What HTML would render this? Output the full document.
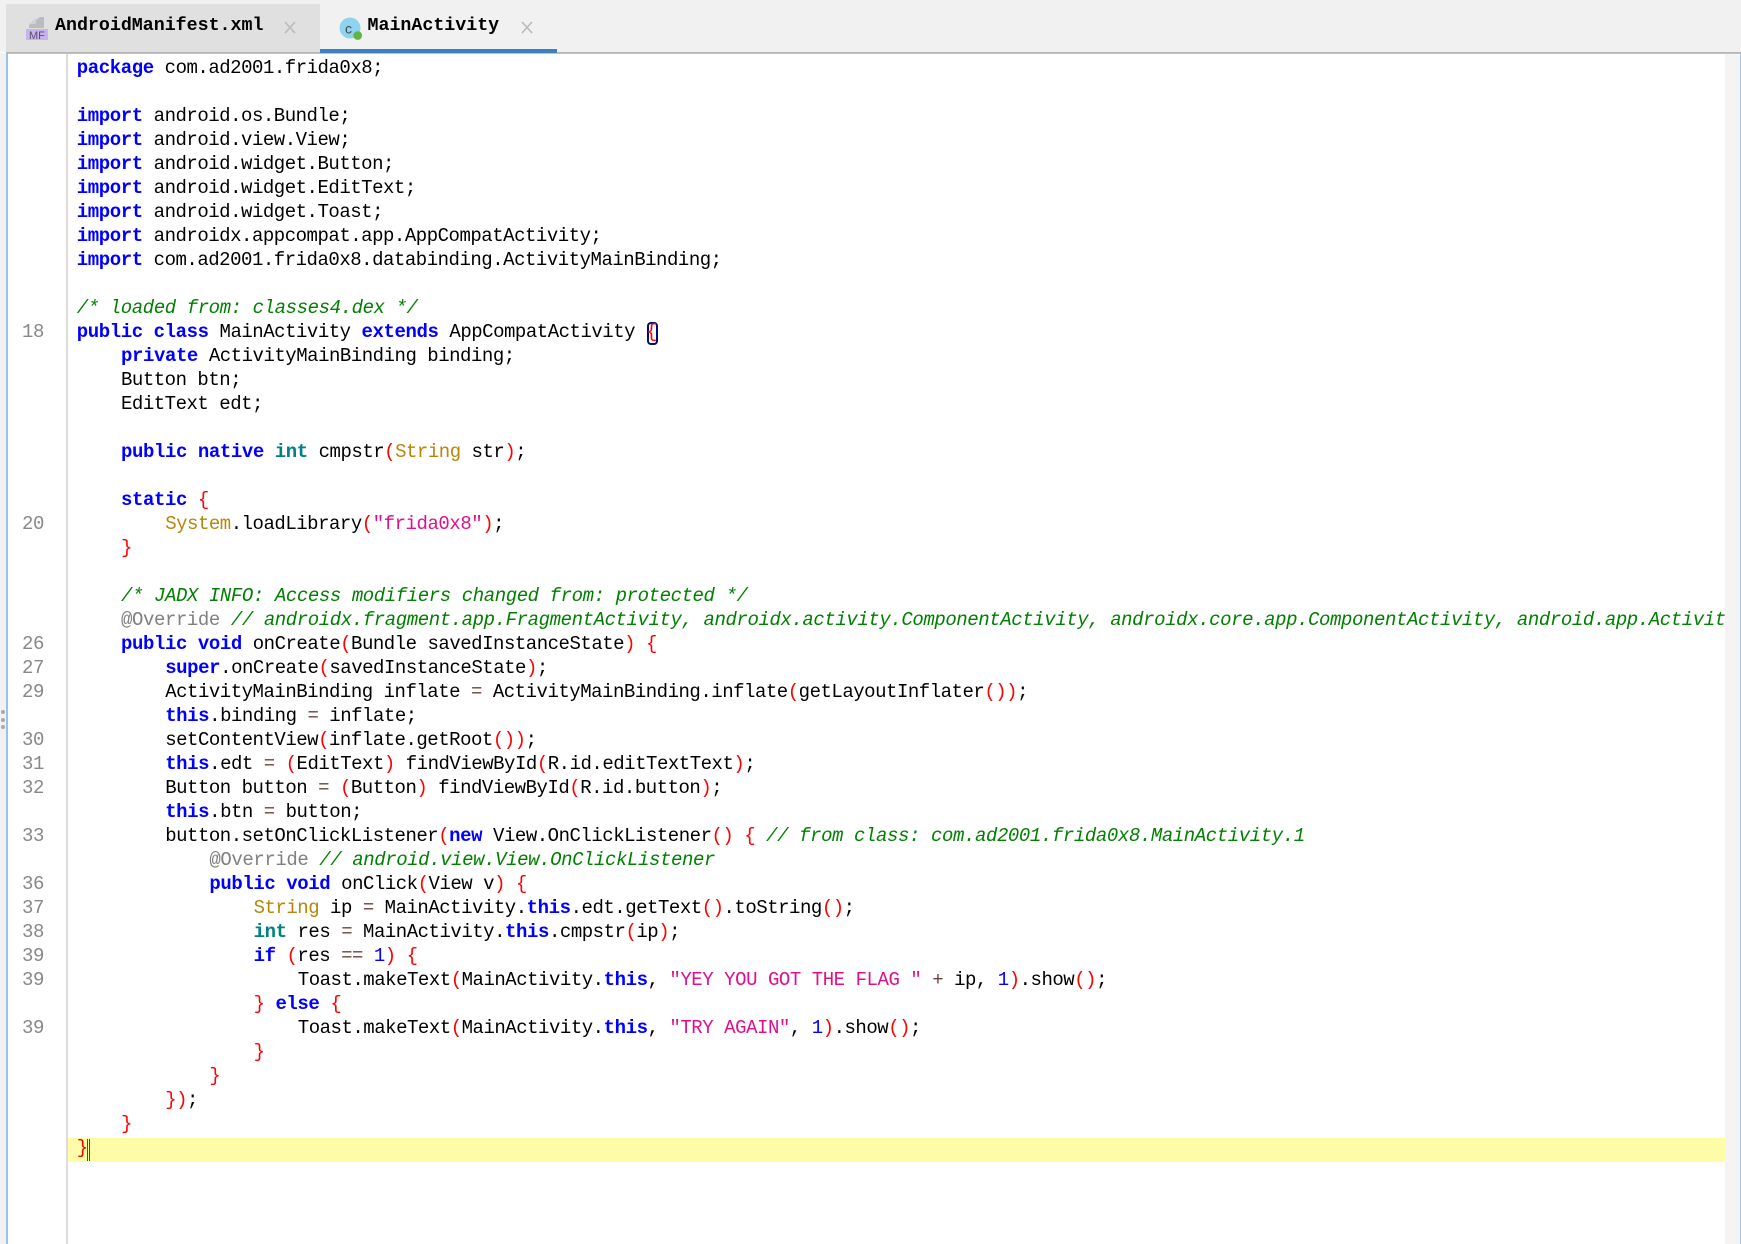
<!DOCTYPE html>
<html><head><meta charset="utf-8"><title>MainActivity</title>
<style>
html,body{margin:0;padding:0;background:#fff}
#r{position:relative;width:1741px;height:1244px;overflow:hidden;background:#fff;font-family:"Liberation Mono",monospace}
.a{position:absolute}
#code{position:absolute;left:76.6px;top:1px;width:1648px;height:1244px;overflow:hidden;font-size:19px;letter-spacing:-0.48px;color:#000}
#code div{position:absolute;left:0.2px;height:24px;line-height:24px;white-space:pre}
#code div.i1{left:44.4px}
#code div.i2{left:88.6px}
#code div.i3{left:132.8px}
#code div.i4{left:177px}
#code div.i5{left:221.2px}
.k{color:#0000ff;font-weight:bold;letter-spacing:-0.41px}
.t{color:#008080;font-weight:bold;letter-spacing:-0.41px}
.r{color:#ff0000}
.c{color:#008000;font-style:italic;letter-spacing:-0.41px}
.s{color:#e0108c;letter-spacing:-0.45px}
.y{color:#b8860b}
.o{color:#6e4040}
.n{color:#0000ff}
.g{color:#808080;letter-spacing:-0.41px}
.ln{position:absolute;left:0;width:44px;text-align:right;height:24px;line-height:24px;font-size:19px;letter-spacing:-0.41px;color:#888;margin-top:1px}
.tab{position:absolute;top:14px;height:24px;line-height:24px;font-size:18.3px;font-weight:bold;color:#000}
</style></head><body><div id="r">
<div class="a" style="left:0;top:0;width:1741px;height:52px;background:#f1f1f1"></div>
<div class="a" style="left:6px;top:4px;width:314px;height:48px;background:#e0e0e0"></div>
<div class="a" style="left:320px;top:49px;width:237px;height:4px;background:#3d80c4"></div>
<div class="a" style="left:557px;top:52px;width:1184px;height:1px;background:#b5b5b5"></div>
<div class="a" style="left:6px;top:52px;width:314px;height:1px;background:#b5b5b5"></div>
<div class="a" style="left:0;top:53px;width:6px;height:1191px;background:#f1f1f1"></div>
<div class="a" style="left:6px;top:53px;width:1735px;height:1px;background:#a9c8e8"></div>
<div class="a" style="left:6px;top:53px;width:2px;height:1191px;background:#9cc0e6"></div>
<div class="a" style="left:66px;top:54px;width:2px;height:1190px;background:#dcdcdc"></div>
<div class="a" style="left:1725px;top:54px;width:15px;height:1190px;background:#f4f4f4"></div>
<div class="a" style="left:1740px;top:53px;width:1px;height:1191px;background:#a9c8e8"></div>
<div class="a" style="left:68px;top:1138px;width:1657px;height:24px;background:#fffca8"></div>
<div class="a" style="left:87px;top:1139px;width:1px;height:22px;background:#f00"></div>
<div class="a" style="left:89px;top:1139px;width:1px;height:22px;background:#f00"></div>
<div class="a" style="left:647px;top:322px;width:7px;height:19px;border:2px solid #000c70;border-radius:4px"></div>
<svg class="a" style="left:0;top:0" width="560" height="50">
<path d="M44 17V28H29V25L40 17Z" fill="#b9bdbf"/><path d="M29 24L36 18V24Z" fill="#cfd2d3"/>
<rect x="26" y="29" width="22" height="11" fill="#c9b2ee"/>
<text x="29" y="39" font-family="Liberation Sans" font-size="11" fill="#5a5068">MF</text>
<path d="M285 22L295 33M295 22L285 33" stroke="#bbb" stroke-width="1.6"/>
<circle cx="350" cy="28" r="10.5" fill="#8fd3ee"/>
<text x="345" y="33.5" font-family="Liberation Sans" font-size="14" fill="#3d4a52">c</text>
<circle cx="357.7" cy="35.5" r="4.4" fill="#62b543"/>
<path d="M522 22L532 33M532 22L522 33" stroke="#bbb" stroke-width="1.6"/>
</svg>
<div class="tab" style="left:55px">AndroidManifest.xml</div>
<div class="tab" style="left:367.5px">MainActivity</div>
<div class="a" style="left:1px;top:710px;width:4px;height:4px;border-radius:2px;background:#aaa"></div>
<div class="a" style="left:1px;top:718px;width:4px;height:4px;border-radius:2px;background:#aaa"></div>
<div class="a" style="left:1px;top:725px;width:4px;height:4px;border-radius:2px;background:#aaa"></div>

<div class="ln" style="top:319px">18</div>
<div class="ln" style="top:511px">20</div>
<div class="ln" style="top:631px">26</div>
<div class="ln" style="top:655px">27</div>
<div class="ln" style="top:679px">29</div>
<div class="ln" style="top:727px">30</div>
<div class="ln" style="top:751px">31</div>
<div class="ln" style="top:775px">32</div>
<div class="ln" style="top:823px">33</div>
<div class="ln" style="top:871px">36</div>
<div class="ln" style="top:895px">37</div>
<div class="ln" style="top:919px">38</div>
<div class="ln" style="top:943px">39</div>
<div class="ln" style="top:967px">39</div>
<div class="ln" style="top:1015px">39</div>

<div id="code">
<div style="top:55px"><span class="k">package</span> com.ad2001.frida0x8;</div>
<div style="top:103px"><span class="k">import</span> android.os.Bundle;</div>
<div style="top:127px"><span class="k">import</span> android.view.View;</div>
<div style="top:151px"><span class="k">import</span> android.widget.Button;</div>
<div style="top:175px"><span class="k">import</span> android.widget.EditText;</div>
<div style="top:199px"><span class="k">import</span> android.widget.Toast;</div>
<div style="top:223px"><span class="k">import</span> androidx.appcompat.app.AppCompatActivity;</div>
<div style="top:247px"><span class="k">import</span> com.ad2001.frida0x8.databinding.ActivityMainBinding;</div>
<div style="top:295px"><span class="c">/* loaded from: classes4.dex */</span></div>
<div style="top:319px"><span class="k">public</span> <span class="k">class</span> MainActivity <span class="k">extends</span> AppCompatActivity <span class="r">{</span></div>
<div class="i1" style="top:343px"><span class="k">private</span> ActivityMainBinding binding;</div>
<div class="i1" style="top:367px">Button btn;</div>
<div class="i1" style="top:391px">EditText edt;</div>
<div class="i1" style="top:439px"><span class="k">public</span> <span class="k">native</span> <span class="t">int</span> cmpstr<span class="r">(</span><span class="y">String</span> str<span class="r">)</span>;</div>
<div class="i1" style="top:487px"><span class="k">static</span> <span class="r">{</span></div>
<div class="i2" style="top:511px"><span class="y">System</span>.loadLibrary<span class="r">(</span><span class="s">"frida0x8"</span><span class="r">)</span>;</div>
<div class="i1" style="top:535px"><span class="r">}</span></div>
<div class="i1" style="top:583px"><span class="c">/* JADX INFO: Access modifiers changed from: protected */</span></div>
<div class="i1" style="top:607px"><span class="g">@Override</span> <span class="c">// androidx.fragment.app.FragmentActivity, androidx.activity.ComponentActivity, androidx.core.app.ComponentActivity, android.app.Activity</span></div>
<div class="i1" style="top:631px"><span class="k">public</span> <span class="k">void</span> onCreate<span class="r">(</span>Bundle savedInstanceState<span class="r">)</span> <span class="r">{</span></div>
<div class="i2" style="top:655px"><span class="k">super</span>.onCreate<span class="r">(</span>savedInstanceState<span class="r">)</span>;</div>
<div class="i2" style="top:679px">ActivityMainBinding inflate <span class="o">=</span> ActivityMainBinding.inflate<span class="r">(</span>getLayoutInflater<span class="r">())</span>;</div>
<div class="i2" style="top:703px"><span class="k">this</span>.binding <span class="o">=</span> inflate;</div>
<div class="i2" style="top:727px">setContentView<span class="r">(</span>inflate.getRoot<span class="r">())</span>;</div>
<div class="i2" style="top:751px"><span class="k">this</span>.edt <span class="o">=</span> <span class="r">(</span>EditText<span class="r">)</span> findViewById<span class="r">(</span>R.id.editTextText<span class="r">)</span>;</div>
<div class="i2" style="top:775px">Button button <span class="o">=</span> <span class="r">(</span>Button<span class="r">)</span> findViewById<span class="r">(</span>R.id.button<span class="r">)</span>;</div>
<div class="i2" style="top:799px"><span class="k">this</span>.btn <span class="o">=</span> button;</div>
<div class="i2" style="top:823px">button.setOnClickListener<span class="r">(</span><span class="k">new</span> View.OnClickListener<span class="r">()</span> <span class="r">{</span> <span class="c">// from class: com.ad2001.frida0x8.MainActivity.1</span></div>
<div class="i3" style="top:847px"><span class="g">@Override</span> <span class="c">// android.view.View.OnClickListener</span></div>
<div class="i3" style="top:871px"><span class="k">public</span> <span class="k">void</span> onClick<span class="r">(</span>View v<span class="r">)</span> <span class="r">{</span></div>
<div class="i4" style="top:895px"><span class="y">String</span> ip <span class="o">=</span> MainActivity.<span class="k">this</span>.edt.getText<span class="r">()</span>.toString<span class="r">()</span>;</div>
<div class="i4" style="top:919px"><span class="t">int</span> res <span class="o">=</span> MainActivity.<span class="k">this</span>.cmpstr<span class="r">(</span>ip<span class="r">)</span>;</div>
<div class="i4" style="top:943px"><span class="k">if</span> <span class="r">(</span>res <span class="o">==</span> <span class="n">1</span><span class="r">)</span> <span class="r">{</span></div>
<div class="i5" style="top:967px">Toast.makeText<span class="r">(</span>MainActivity.<span class="k">this</span>, <span class="s">"YEY YOU GOT THE FLAG "</span> <span class="o">+</span> ip, <span class="n">1</span><span class="r">)</span>.show<span class="r">()</span>;</div>
<div class="i4" style="top:991px"><span class="r">}</span> <span class="k">else</span> <span class="r">{</span></div>
<div class="i5" style="top:1015px">Toast.makeText<span class="r">(</span>MainActivity.<span class="k">this</span>, <span class="s">"TRY AGAIN"</span>, <span class="n">1</span><span class="r">)</span>.show<span class="r">()</span>;</div>
<div class="i4" style="top:1039px"><span class="r">}</span></div>
<div class="i3" style="top:1063px"><span class="r">}</span></div>
<div class="i2" style="top:1087px"><span class="r">})</span>;</div>
<div class="i1" style="top:1111px"><span class="r">}</span></div>
<div style="top:1135px"><span class="r">}</span></div>
</div>
</div></body></html>
